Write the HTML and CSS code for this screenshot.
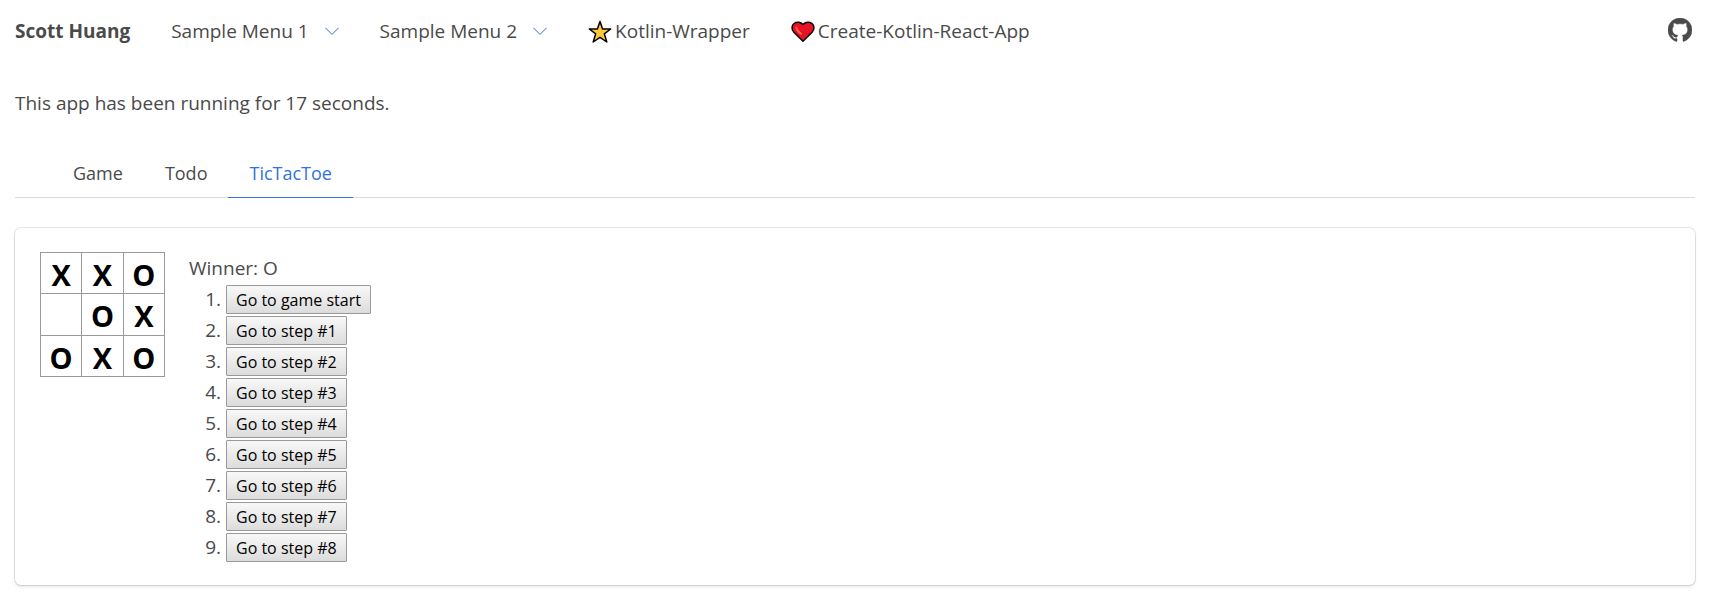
FILE: index.html
```html
<!DOCTYPE html>
<html lang="en">
<head>
<meta charset="utf-8">
<meta name="viewport" content="width=device-width, initial-scale=1">
<title>Scott Huang</title>
<link rel="stylesheet" href="styles.css">
</head>
<body>
<nav class="navbar">
  <a class="brand" href="#">Scott Huang</a>
  <a class="nav-link menu" href="#">Sample Menu 1
    <svg class="chevron" viewBox="0 0 14 9" aria-hidden="true"><path d="M.5 .8 7 7.500 13.500 .8"/></svg>
  </a>
  <a class="nav-link menu" href="#">Sample Menu 2
    <svg class="chevron" viewBox="0 0 14 9" aria-hidden="true"><path d="M.5 .8 7 7.500 13.500 .8"/></svg>
  </a>
  <a class="nav-link" href="#"><svg class="emoji" viewBox="0 0 24 24" aria-hidden="true"><path fill="#ffc83d" stroke="#000" stroke-width="1.500" stroke-linejoin="round" d="M12 1.500 14.600 9H22.700L16.300 13.800 18.800 22 12 17.300 5.200 22 7.700 13.800 1.300 9H9.400Z"/></svg>Kotlin-Wrapper</a>
  <a class="nav-link" href="#"><svg class="emoji" viewBox="0 0 24 24" aria-hidden="true"><path fill="#e81224" stroke="#000" stroke-width="1.500" stroke-linejoin="round" d="M12 21.300 2.900 12.200C.2 9.300.6 5.300 3 3.500 5.800 1.400 9.800 2 12 4.500 14.200 2 18.200 1.400 21 3.500 23.400 5.300 23.800 9.300 21.100 12.200Z"/><path fill="none" stroke="#f4694a" stroke-width="2" stroke-linecap="round" d="M5.500 7.500C5.500 9.800 7 11.500 10 13.800"/></svg>Create-Kotlin-React-App</a>
  <a class="github" href="#" aria-label="GitHub"><svg viewBox="0 0 16 16" aria-hidden="true"><path d="M8 0C3.580 0 0 3.580 0 8c0 3.540 2.290 6.530 5.470 7.590.4.070.55-.17.55-.38 0-.19-.010-.82-.010-1.490-2.010.37-2.530-.49-2.690-.94-.090-.23-.48-.94-.82-1.130-.28-.15-.68-.52-.010-.53.63-.010 1.080.58 1.230.82.72 1.210 1.870.87 2.330.66.070-.52.28-.87.51-1.070-1.780-.2-3.640-.89-3.640-3.950 0-.87.31-1.590.82-2.150-.080-.2-.36-1.020.080-2.120 0 0 .67-.21 2.200.82.64-.18 1.320-.27 2-.27s1.360.090 2 .27c1.530-1.040 2.200-.82 2.200-.82.44 1.100.16 1.920.080 2.120.51.56.82 1.270.82 2.150 0 3.070-1.870 3.750-3.650 3.950.29.25.54.73.54 1.480 0 1.070-.010 1.930-.010 2.200 0 .21.15.46.55.38A8.010 8.010 0 0 0 16 8c0-4.420-3.580-8-8-8z"/></svg></a>
</nav>
<main class="content">
  <p class="status">This app has been running for 17 seconds.</p>
  <div class="tabs" role="tablist">
    <button class="tab" type="button" role="tab" aria-selected="false">Game</button>
    <button class="tab" type="button" role="tab" aria-selected="false">Todo</button>
    <button class="tab active" type="button" role="tab" aria-selected="true">TicTacToe</button>
  </div>
  <section class="card">
    <div class="board">
      <button class="square" type="button">X</button>
      <button class="square" type="button">X</button>
      <button class="square" type="button">O</button>
      <button class="square" type="button" aria-label="Empty square"></button>
      <button class="square" type="button">O</button>
      <button class="square" type="button">X</button>
      <button class="square" type="button">O</button>
      <button class="square" type="button">X</button>
      <button class="square" type="button">O</button>
    </div>
    <div class="info">
      <div>Winner: O</div>
      <ol class="moves">
        <li><button class="move" type="button">Go to game start</button></li>
        <li><button class="move" type="button">Go to step #1</button></li>
        <li><button class="move" type="button">Go to step #2</button></li>
        <li><button class="move" type="button">Go to step #3</button></li>
        <li><button class="move" type="button">Go to step #4</button></li>
        <li><button class="move" type="button">Go to step #5</button></li>
        <li><button class="move" type="button">Go to step #6</button></li>
        <li><button class="move" type="button">Go to step #7</button></li>
        <li><button class="move" type="button">Go to step #8</button></li>
      </ol>
    </div>
  </section>
</main>
</body>
</html>
```
FILE: styles.css
```css
* {
  box-sizing: border-box;
}

body {
  margin: 0;
  background: #fff;
  color: #4a4a4a;
  font: 19px/31px "Open Sans", "Noto Sans", sans-serif;
}

a {
  color: inherit;
  text-decoration: none;
}

button {
  font-family: inherit;
  cursor: pointer;
}

.navbar {
  display: flex;
  align-items: center;
  gap: 41px;
  padding: 16px 43px 15px 15px;
  white-space: nowrap;
}

.brand {
  font-weight: 700;
}

.nav-link {
  display: flex;
  align-items: center;
  gap: 3px;
}

.menu {
  gap: 16px;
}

.chevron {
  width: 14px;
  height: 9px;
  fill: none;
  stroke: #3273dc;
  stroke-width: 1;
}

.emoji {
  width: 24px;
  height: 24px;
}

.github {
  display: flex;
  margin-left: auto;
}

.github svg {
  width: 24px;
  height: 24px;
  margin-bottom: 4px;
  fill: #4a4a4a;
  stroke: #4a4a4a;
  stroke-width: 0.3;
}

.content {
  padding: 26px 40px 24px 15px;
}

.status {
  margin: 0 0 31px;
}

.tabs {
  display: flex;
  padding-left: 37px;
  border-bottom: 1px solid #dbdbdb;
}

.tab {
  margin-bottom: -1px;
  padding: 8px 21px;
  border: 0;
  border-bottom: 1px solid #dbdbdb;
  background: none;
  color: inherit;
  font-size: 18px;
  line-height: 31px;
}

.tab.active {
  border-color: #3273dc;
  color: #3273dc;
}

.card {
  display: flex;
  align-items: flex-start;
  gap: 24px;
  margin-top: 30px;
  padding: 24px 25px 22px;
  border-radius: 6px;
  box-shadow: 0 2px 3px rgba(10, 10, 10, 0.1), 0 0 0 1px rgba(10, 10, 10, 0.1);
}

.board {
  display: grid;
  grid-template-columns: repeat(3, 1fr);
  width: 125px;
  border: 1px solid #999;
  border-width: 1px 0 0 1px;
}

.square {
  aspect-ratio: 1;
  padding: 4px 0 0;
  border: 1px solid #999;
  border-width: 0 1px 1px 0;
  background: #fff;
  color: #000;
  font-size: 29px;
  font-weight: 700;
  line-height: 36px;
}

.info {
  padding-top: 1px;
}

.moves {
  margin: 0;
  padding-left: 37px;
}

.move {
  height: 29px;
  margin: 1px 0;
  padding: 0 9px;
  border: 1px solid #999;
  border-radius: 1px;
  background: linear-gradient(#f8f8f8, #dcdcdc);
  color: #000;
  font-size: 16px;
  line-height: 26px;
  vertical-align: top;
}
```
